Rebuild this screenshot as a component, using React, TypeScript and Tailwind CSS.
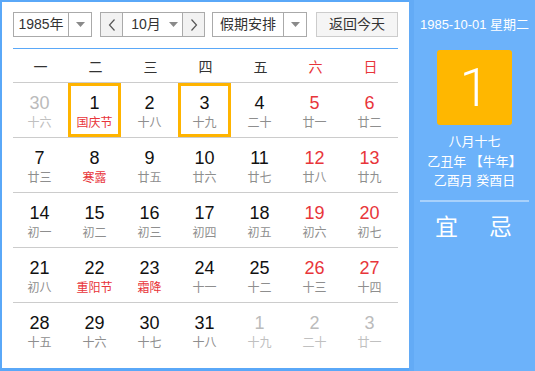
import React from "react";

type Cell = { d: string; l: string; red?: boolean; hol?: boolean; other?: boolean; sel?: boolean };

const rows: Cell[][] = [
  [
    { d: "30", l: "十六", other: true },
    { d: "1", l: "国庆节", hol: true, sel: true },
    { d: "2", l: "十八" },
    { d: "3", l: "十九", sel: true },
    { d: "4", l: "二十" },
    { d: "5", l: "廿一", red: true },
    { d: "6", l: "廿二", red: true },
  ],
  [
    { d: "7", l: "廿三" },
    { d: "8", l: "寒露", hol: true },
    { d: "9", l: "廿五" },
    { d: "10", l: "廿六" },
    { d: "11", l: "廿七" },
    { d: "12", l: "廿八", red: true },
    { d: "13", l: "廿九", red: true },
  ],
  [
    { d: "14", l: "初一" },
    { d: "15", l: "初二" },
    { d: "16", l: "初三" },
    { d: "17", l: "初四" },
    { d: "18", l: "初五" },
    { d: "19", l: "初六", red: true },
    { d: "20", l: "初七", red: true },
  ],
  [
    { d: "21", l: "初八" },
    { d: "22", l: "重阳节", hol: true },
    { d: "23", l: "霜降", hol: true },
    { d: "24", l: "十一" },
    { d: "25", l: "十二" },
    { d: "26", l: "十三", red: true },
    { d: "27", l: "十四", red: true },
  ],
  [
    { d: "28", l: "十五" },
    { d: "29", l: "十六" },
    { d: "30", l: "十七" },
    { d: "31", l: "十八" },
    { d: "1", l: "十九", other: true },
    { d: "2", l: "二十", other: true },
    { d: "3", l: "廿一", other: true },
  ],
];

const weekdays = ["一", "二", "三", "四", "五", "六", "日"];

function Caret() {
  return (
    <svg width="9" height="5" viewBox="0 0 9 5">
      <path d="M0 0 L9 0 L4.5 5 Z" fill="#8a8a8a" />
    </svg>
  );
}

function Chevron({ dir }: { dir: "l" | "r" }) {
  return (
    <svg width="8" height="12" viewBox="0 0 8 12">
      <path
        d={dir === "l" ? "M6.5 0.5 L1.5 6 L6.5 11.5" : "M1.5 0.5 L6.5 6 L1.5 11.5"}
        fill="none"
        stroke="#555"
        strokeWidth="1.2"
      />
    </svg>
  );
}

export default function App() {
  const font = { fontFamily: '"Liberation Sans", "Noto Sans CJK SC", sans-serif' };
  return (
    <div className="flex w-[535px] h-[371px] bg-[#5aa8f8]" style={font}>
      <div className="w-[409px] h-full border-l-2 border-t-2 border-b-[3px] border-[#5aa8f8] bg-white px-[11px] pt-[10px] box-border">
        {/* controls */}
        <div className="flex h-[25px] text-[14px] text-[#333]">
          <div className="flex w-[79px] border border-[#aaaaaa]">
            <div className="w-[55px] flex items-center justify-center border-r border-[#aaaaaa]">1985年</div>
            <div className="flex-1 flex items-center justify-center">
              <Caret />
            </div>
          </div>
          <div className="flex ml-[8px] w-[105px] border border-[#aaaaaa]">
            <div className="w-[22px] flex items-center justify-center bg-[#f2f2f2] border-r border-[#aaaaaa]">
              <Chevron dir="l" />
            </div>
            <div className="flex-1 flex items-center justify-center gap-[8px] pl-[4px]">
              <span>10月</span>
              <Caret />
            </div>
            <div className="w-[22px] flex items-center justify-center bg-[#f2f2f2] border-l border-[#aaaaaa]">
              <Chevron dir="r" />
            </div>
          </div>
          <div className="flex ml-[7px] w-[95px] border border-[#aaaaaa]">
            <div className="w-[71px] flex items-center justify-center border-r border-[#aaaaaa]">假期安排</div>
            <div className="flex-1 flex items-center justify-center">
              <Caret />
            </div>
          </div>
          <div className="ml-[9px] w-[82px] flex items-center justify-center border border-[#cccccc] bg-[#f5f5f5]">
            返回今天
          </div>
        </div>
        <div className="mt-[11px] h-px bg-[#5aa8f8]" />
        {/* header */}
        <div className="flex h-[33px] pt-[3px] text-[14px] text-[#333]">
          {weekdays.map((w, i) => (
            <div
              key={w}
              className={`w-[55px] flex items-center justify-center ${i >= 5 ? "text-[#e8353a]" : ""}`}
            >
              {w}
            </div>
          ))}
        </div>
        {rows.map((r, ri) => (
          <div key={ri} className="flex h-[55px] border-t border-[#cccccc]">
            {r.map((c, ci) => {
              const numColor = c.other ? "text-[#bbbbbb]" : c.red ? "text-[#e8353a]" : "text-[#111]";
              const lunColor = c.other ? "text-[#c0c0c0]" : c.hol ? "text-[#e8353a]" : "text-[#8e8e8e]";
              return (
                <div key={ci} className="w-[55px] h-[54px]">
                  <div
                    className={`w-[53px] h-[54px] flex flex-col items-center box-border ${
                      c.sel ? "border-[3px] border-[#ffb400] pt-[7px]" : "pt-[10px]"
                    }`}
                  >
                    <div className={`text-[18px] leading-[21px] ${numColor}`}>{c.d}</div>
                    <div className={`text-[12px] leading-[16px] mt-[1px] ${lunColor}`}>{c.l}</div>
                  </div>
                </div>
              );
            })}
          </div>
        ))}
      </div>
      {/* right panel */}
      <div className="flex-1 h-full bg-[#6cb2fa] border-l-[5px] border-[#63abf6] flex flex-col items-center text-white">
        <div className="mt-[17px] text-[13px] leading-[16px]">1985-10-01 星期二</div>
        <div
          className="mt-[17px] w-[75px] h-[75px] rounded-[3px] bg-[#ffb700] flex items-center justify-center text-[54px] font-light"
          style={{ fontFamily: 'Roboto, "Liberation Sans", sans-serif' }}
        >
          1
        </div>
        <div className="mt-[7px] text-[13px] leading-[19.5px] flex flex-col items-center">
          <div>八月十七</div>
          <div>乙丑年 【牛年】</div>
          <div>乙酉月 癸酉日</div>
        </div>
        <div className="mt-[9px] w-[109px] h-[2px] bg-[#a8d1fb]" />
        <div className="mt-[11px] flex gap-[31px] text-[23px] leading-[28px] -ml-[2px]">
          <span>宜</span>
          <span>忌</span>
        </div>
      </div>
    </div>
  );
}
